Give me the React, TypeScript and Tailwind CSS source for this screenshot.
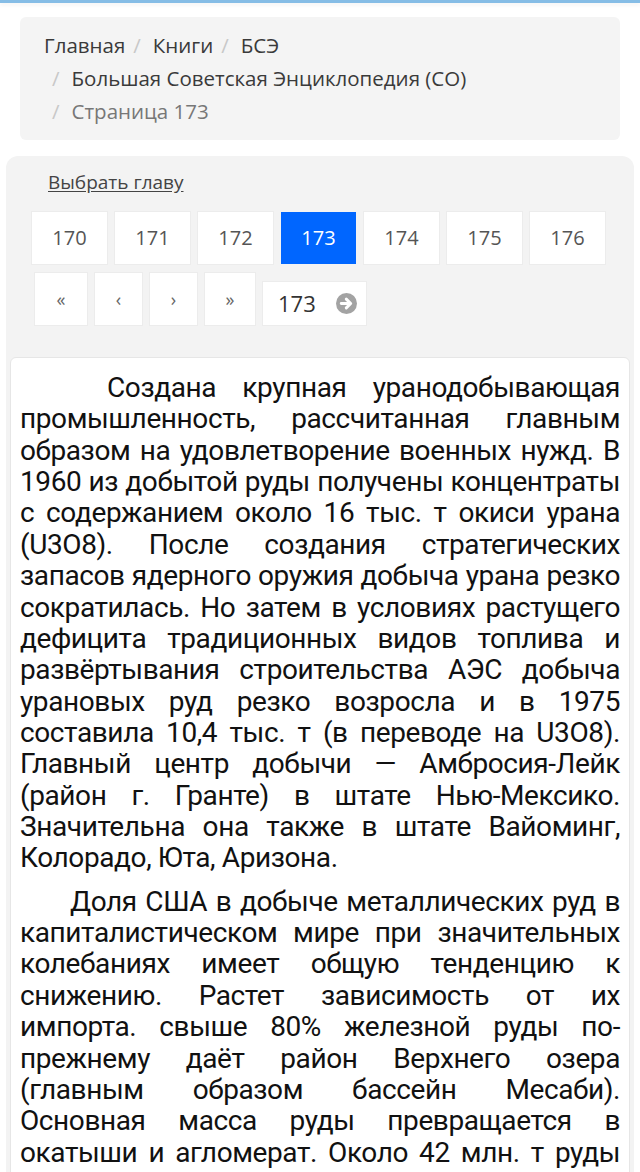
import React from "react";

const CRUMBS = [
  { label: "Главная", href: "#" },
  { label: "Книги", href: "#" },
  { label: "БСЭ", href: "#" },
  { label: "Большая Советская Энциклопедия (СО)", href: "#" },
  { label: "Страница 173" },
];

const PAGES = [170, 171, 172, 173, 174, 175, 176];
const CURRENT = 173;

const NAV = [
  { label: "«", w: "w-[52px]" },
  { label: "‹", w: "w-[47px]" },
  { label: "›", w: "w-[47px]" },
  { label: "»", w: "w-[50px]" },
];

// lines kept as they break on the source page
const PARAGRAPHS = [
  {
    indent: "pl-[87px]",
    lines: [
      "Создана крупная уранодобывающая",
      "промышленность, рассчитанная главным",
      "образом на удовлетворение военных нужд. В",
      "1960 из добытой руды получены концентраты",
      "с содержанием около 16 тыс. т окиси урана",
      "(U3O8). После создания стратегических",
      "запасов ядерного оружия добыча урана резко",
      "сократилась. Но затем в условиях растущего",
      "дефицита традиционных видов топлива и",
      "развёртывания строительства АЭС добыча",
      "урановых руд резко возросла и в 1975",
      "составила 10,4 тыс. т (в переводе на U3O8).",
      "Главный центр добычи — Амбросия-Лейк",
      "(район г. Гранте) в штате Нью-Мексико.",
      "Значительна она также в штате Вайоминг,",
      "Колорадо, Юта, Аризона.",
    ],
  },
  {
    indent: "pl-[50px]",
    lines: [
      "Доля США в добыче металлических руд в",
      "капиталистическом мире при значительных",
      "колебаниях имеет общую тенденцию к",
      "снижению. Растет зависимость от их",
      "импорта. свыше 80% железной руды по-",
      "прежнему даёт район Верхнего озера",
      "(главным образом бассейн Месаби).",
      "Основная масса руды превращается в",
      "окатыши и агломерат. Около 42 млн. т руды",
      "ежегодно ввозится из Канады, Венесуэлы,",
      "Бразилии, Либерии и других стран.",
    ],
  },
];

function ArrowCircle() {
  return (
    <svg width="21" height="21" viewBox="0 0 20 20" aria-hidden>
      <circle cx="10" cy="10" r="10" fill="#a3a3a3" />
      <path
        d="M5 10h8.5M9.8 5.8 14 10l-4.2 4.2"
        fill="none"
        stroke="#fff"
        strokeWidth="2.8"
        strokeLinecap="round"
        strokeLinejoin="round"
      />
    </svg>
  );
}

export default function App() {
  return (
    <div className="min-h-screen bg-white font-['Open_Sans',sans-serif]">
      <div className="h-[3px] bg-[#86bde6] shadow-[0_2px_4px_rgba(0,0,0,0.06)]" />

      <nav className="mx-5 mt-[14px] rounded-md bg-[#f4f4f4] px-6 py-[12px]">
        <ol className="flex flex-wrap text-[20.5px] leading-[33px]">
          {CRUMBS.map((c, i) => (
            <li key={c.label} className={i > 0 ? "flex pl-2" : "flex"}>
              {i > 0 ? <span className="pr-3 text-[#c8c8c8]">/</span> : null}
              {c.href ? (
                <a href={c.href} className="text-[#3a3a3a]">
                  {c.label}
                </a>
              ) : (
                <span className="text-[#777]">{c.label}</span>
              )}
            </li>
          ))}
        </ol>
      </nav>

      <section className="mx-[6px] mt-4 rounded-xl bg-[#f3f3f3] px-[4px] pt-[13px]">
        <div className="px-[22px]">
          <a href="#" className="ml-[16px] text-[19px] leading-[26px] text-[#444] underline underline-offset-2">
            Выбрать главу
          </a>

          <div className="mt-[17px] flex gap-2">
            {PAGES.map((p) => (
              <a
                key={p}
                href="#"
                className={
                  p === CURRENT
                    ? "flex h-[52px] w-[75px] items-center justify-center bg-[#0066ff] text-[20px] text-white"
                    : "flex h-[52px] w-[75px] items-center justify-center bg-white text-[20px] text-[#555] shadow-[0_0_0_1px_#ececec]"
                }
              >
                {p}
              </a>
            ))}
          </div>

          <div className="mt-[9px] ml-[3px] flex items-end gap-2">
            {NAV.map((n) => (
              <a
                key={n.label}
                href="#"
                className={`flex h-[52px] ${n.w} items-center justify-center bg-white text-[18px] text-[#666] shadow-[0_0_0_1px_#ececec]`}
              >
                {n.label}
              </a>
            ))}
            <div className="flex h-[43px] w-[103px] items-center justify-between bg-white pl-[15px] pr-[9px] shadow-[0_0_0_1px_#ececec]">
              <span className="text-[22px] text-[#333]">173</span>
              <ArrowCircle />
            </div>
          </div>
        </div>

        <article className="mt-[32px] rounded-md border border-[#e6e6e6] bg-white px-[9px] pt-[14px] pb-6 font-['Roboto',sans-serif] text-[28px] leading-[1.12] tracking-[-0.4px] text-[#111]">
          {PARAGRAPHS.map((p, i) => (
            <p key={i} className={i > 0 ? "mt-[12px]" : ""}>
              {p.lines.map((line, j) => {
                const last = j === p.lines.length - 1;
                return (
                  <span
                    key={j}
                    className={`block whitespace-nowrap ${j === 0 ? p.indent : ""} ${
                      last ? "text-left" : "text-justify [text-align-last:justify]"
                    }`}
                  >
                    {line}
                  </span>
                );
              })}
            </p>
          ))}
        </article>
      </section>
    </div>
  );
}
